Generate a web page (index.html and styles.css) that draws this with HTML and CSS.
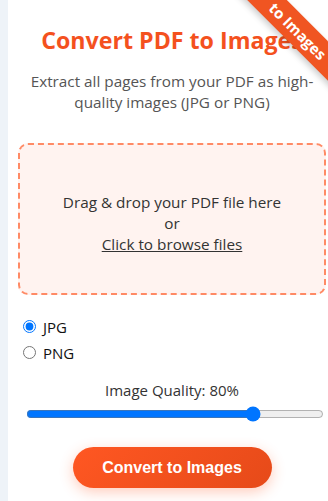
FILE: index.html
```html
<!DOCTYPE html>
<html lang="en">
<head>
  <meta charset="UTF-8">
  <meta name="viewport" content="width=device-width, initial-scale=1.0">
  <title>Convert PDF to Images</title>
  <link rel="stylesheet" href="styles.css">
</head>
<body>
  <div class="card">
    <div class="ribbon">to Images</div>
    <h1 class="title">Convert PDF to Images</h1>
    <p class="subtitle">Extract all pages from your PDF as high-quality images (JPG or PNG)</p>

    <div class="dropzone">
      <span>Drag &amp; drop your PDF file here</span>
      <span>or</span>
      <span class="browse">Click to browse files</span>
    </div>

    <div class="formats">
      <label class="option"><input type="radio" name="format" value="jpg" checked> JPG</label>
      <label class="option"><input type="radio" name="format" value="png"> PNG</label>
    </div>

    <div class="quality-label">Image Quality: 80%</div>
    <input class="quality" type="range" min="10" max="100" value="80">

    <button class="convert">Convert to Images</button>
  </div>
</body>
</html>
```

FILE: styles.css
```css
body {
  margin: 0;
  padding-left: 8px;
  background-color: #eef3f8;
  font-family: "Open Sans", "Noto Sans", sans-serif;
  overflow: hidden;
}
.card {
  position: relative;
  overflow: hidden;
  box-sizing: border-box;
  width: 328px;
  min-height: 501px;
  padding: 22px 10px 20px;
  background-color: #fff;
}
.ribbon {
  position: absolute;
  top: 17px;
  left: 215px;
  width: 150px;
  height: 28px;
  line-height: 28px;
  transform: rotate(45deg);
  background-color: #f05522;
  color: #fff;
  font-size: 15px;
  font-weight: bold;
  text-align: center;
  box-shadow: 0 3px 6px rgba(0, 0, 0, 0.2);
}
.title {
  margin: 0;
  font-size: 23.2px;
  line-height: 36px;
  color: #f4511e;
  text-align: center;
}
.subtitle {
  margin: 13px 6px 0;
  font-size: 15.3px;
  line-height: 21px;
  color: #555;
  text-align: center;
}
.dropzone {
  display: flex;
  flex-direction: column;
  align-items: center;
  justify-content: center;
  box-sizing: border-box;
  height: 152px;
  margin-top: 30px;
  padding-top: 8px;
  border: 2px dashed #ff8a65;
  border-radius: 10px;
  background-color: #fff3f0;
  color: #333;
  font-size: 15.3px;
  line-height: 21px;
}
.browse {
  text-decoration: underline;
}
.formats {
  margin-top: 19px;
}
.option {
  display: block;
  font-size: 15px;
  line-height: 26px;
  color: #111;
}
.quality-label {
  margin-top: 14px;
  font-size: 15px;
  line-height: 21px;
  color: #333;
  text-align: center;
}
.quality {
  display: block;
  width: 298px;
  margin: 5px 0 0 8px;
}
.convert {
  display: block;
  width: 199px;
  height: 41px;
  margin: 25px auto 0;
  border: none;
  border-radius: 21px;
  background: linear-gradient(135deg, #ff5722, #e64a19);
  color: #fff;
  font-family: "Liberation Sans", Arial, sans-serif;
  font-size: 16px;
  font-weight: bold;
  box-shadow: 0 4px 14px rgba(255, 87, 34, 0.3);
  cursor: pointer;
}
```
